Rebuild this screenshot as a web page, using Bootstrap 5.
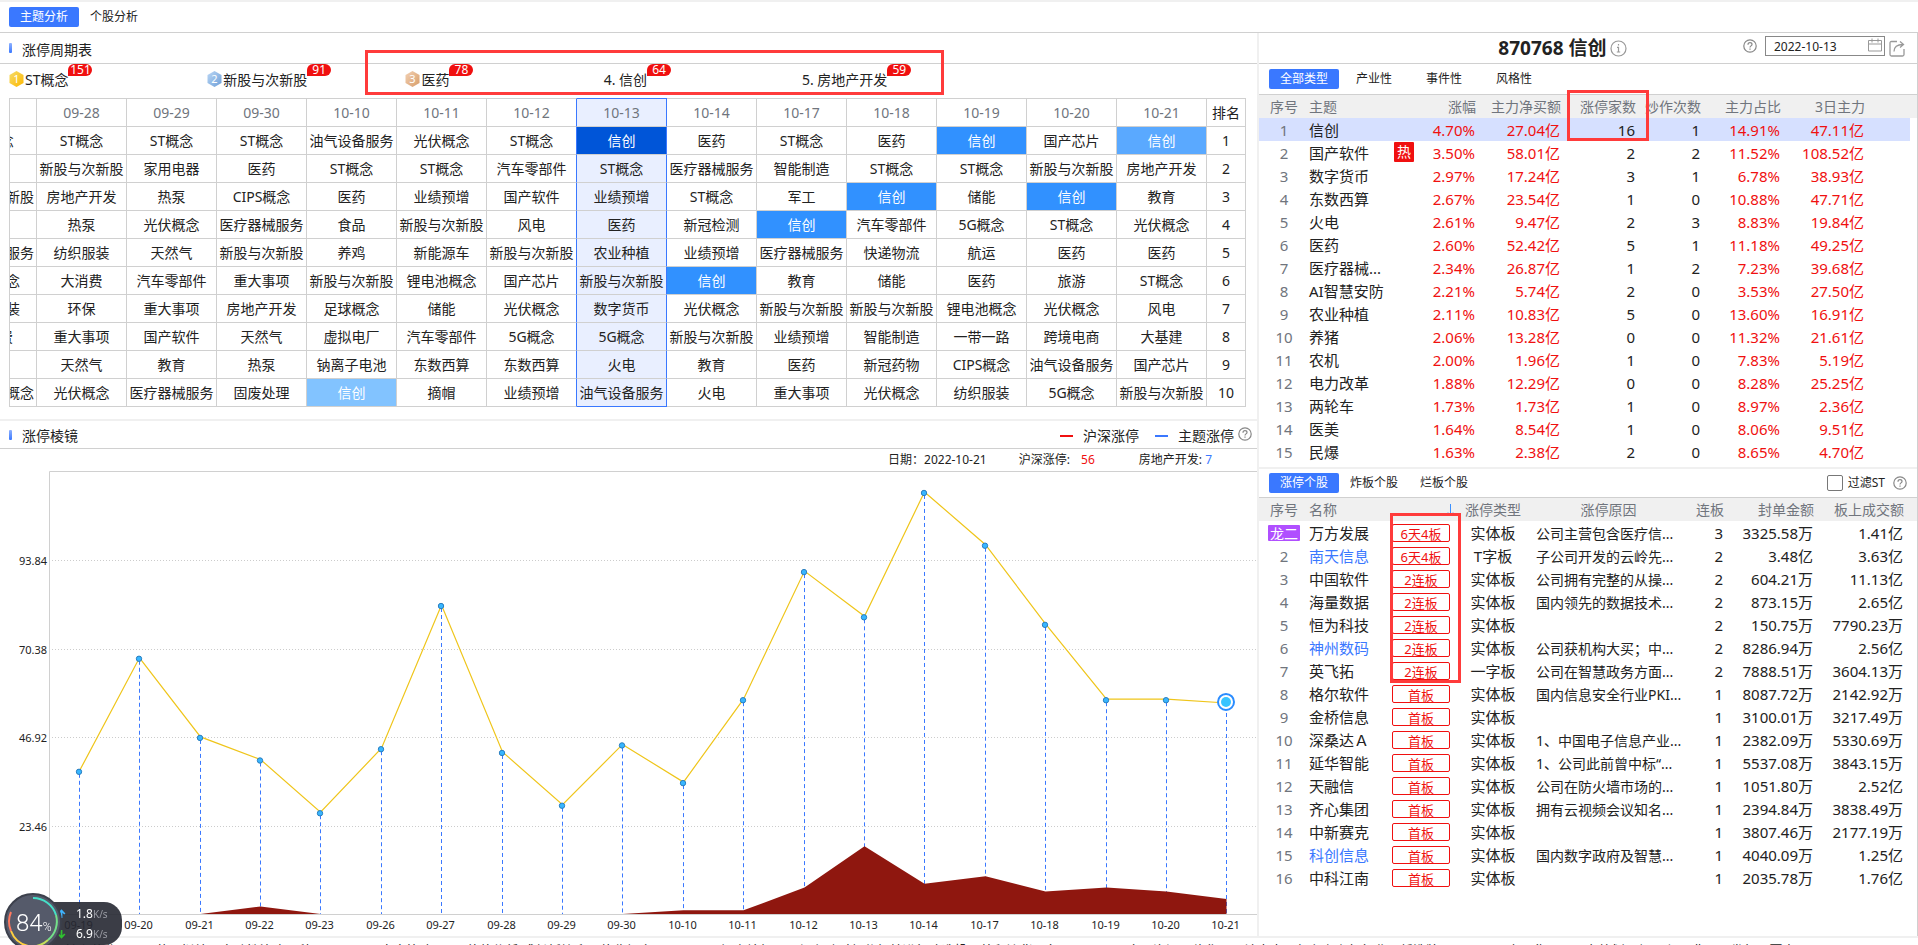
<!DOCTYPE html>
<html lang="zh-CN">
<head>
<meta charset="utf-8">
<meta name="viewport" content="width=device-width, initial-scale=1">
<title>主题分析</title>
<link rel="stylesheet" href="https://cdn.jsdelivr.net/npm/bootstrap@5.3.0/dist/css/bootstrap.min.css">
<style>
  :root { --line:#d0d0d0; --strip:#f0f0f0; --blue:#3a78ff; --red:#f01010; --ink:#222; --dim:#70757d; }
  body { font-family:"Noto Sans","Noto Sans CJK SC",sans-serif; font-size:14px; line-height:20px; color:var(--ink); }
  .app { height:100vh; min-height:800px; border-top:2px solid var(--strip); }
  .app-tabs { height:31px; padding:0 9px; border-bottom:1px solid var(--line); }
  .tab-btn { border:0; background:none; color:var(--ink); font-size:12px; line-height:20px; height:20px; width:70px; padding:0; border-radius:2px; }
  .tab-btn.active { background:var(--blue); color:#fff; }
  .panes { grid-template-columns:minmax(0,1257fr) 2px minmax(0,659fr); min-height:0; }
  .splitter { background:var(--strip); }
  .bar { height:31px; border-bottom:1px solid var(--line); }
  .bar-short { height:28px; }
  .bar-title { padding:3px 0 0 10px; }
  .marker { width:3px; height:10px; margin-left:9px; background:linear-gradient(#8fb2ff,#3a78ff); border-radius:1px; }
  .gap-strip { height:2px; background:var(--strip); flex:none; }

  .rank-list { height:34px; padding:6px 9px 0; }
  .rank-item { width:16%; white-space:nowrap; }
  .rank-item svg { margin-right:1px; }
  .count { background:var(--red); color:#fff; font-size:12px; line-height:12px; height:12px; width:24px; text-align:center; border-radius:6px 6px 6px 0; margin-top:-6px; }
  .callout { position:absolute; border:3px solid #ff3b3b; pointer-events:none; z-index:3; }
  .callout-rank { left:29%; width:579px; top:17px; height:45px; }
  .callout-count { left:308px; top:-5px; width:82px; height:51px; }
  .callout-tag { left:131px; top:15px; width:71px; height:170px; }

  .cycle { table-layout:fixed; border-collapse:separate; border-spacing:0; width:calc(100% - 20px); margin:0 11px 12px 9px; }
  .cycle th, .cycle td { height:28px; padding:0; border-right:1px solid var(--line); border-bottom:1px solid var(--line); text-align:center; white-space:nowrap; overflow:hidden; font-weight:400; line-height:20px; }
  .cycle th { height:29px; border-top:1px solid var(--line); color:var(--dim); }
  .cycle th:first-child, .cycle td:first-child { border-left:1px solid var(--line); }
  .cycle th:last-child { color:var(--ink); }
  .cycle .cut { width:90px; margin-left:-63px; }
  .cycle .pre { border-right-color:var(--blue); }
  .cycle .sel { background:#e9efff; border-right-color:var(--blue); }
  .cycle th.sel { border-top-color:var(--blue); }
  .cycle tr:last-child .sel { border-bottom-color:var(--blue); }
  .cycle .lv1 { background:#0055d8; color:#fff; }
  .cycle .lv2 { background:#3191ff; color:#fff; }
  .cycle .lv3 { background:#5aa9ff; color:#fff; }
  .cycle .lv4 { background:#82c3ff; color:#fff; }

  .legend { padding:2px 5px 0 0; }
  .dash { width:13px; height:2px; margin-right:10px; }
  .dash-red { background:var(--red); }
  .dash-blue { background:var(--blue); }
  .info-row { height:22px; font-size:12px; line-height:20px; padding:1px 45px 0 0; gap:32px; }
  .info-row .wide { margin-right:12px; }
  .chart-box { min-height:200px; position:relative; }
  .chart-box svg { position:absolute; inset:0; width:100%; height:100%; }
  .chart-box text { font-size:11px; fill:var(--ink); }

  .side { border-right:1px solid var(--line); }
  .heading { width:56%; }
  .code { font-size:19px; font-weight:700; line-height:28px; }
  .date-input { width:120px; height:20px; border:1px solid #888; padding:0 8px; font-size:12px; line-height:18px; color:var(--ink); background:#fff; border-radius:0; }
  .date-wrap { position:relative; }
  .date-wrap svg { position:absolute; right:3px; top:2px; }
  .sub-tabs { height:31px; padding:0 10px; border-bottom:1px solid var(--line); }
  .sub-tabs-short { height:29px; }
  .st-label { font-size:12px; }
  .grid-table { table-layout:fixed; width:100%; border-collapse:separate; border-spacing:0; }
  .grid-table th, .grid-table td { padding:0; height:23px; line-height:22px; white-space:nowrap; overflow:visible; text-align:right; }
  .grid-table th { background:var(--strip); color:var(--dim); font-weight:400; font-size:14px; }
  .grid-table th svg { display:block; margin-left:auto; }
  .grid-table td { font-size:15px; padding-right:1px; }
  .grid-table .c { text-align:center; padding:0; }
  .grid-table .l { text-align:left; padding:0; }
  .grid-table .no { color:var(--dim); }
  .grid-table .up { color:var(--red); }
  .grid-table .picked td { background:#d6e0ff; }
  .grid-table .picked td:last-child { background:linear-gradient(to left,#fff 7px,#d6e0ff 7px); }
  .grid-table .why { font-size:14px; line-height:20px; padding-top:2px; }
  .grid-table a { color:inherit; text-decoration:none; }
  .grid-table a.held { color:var(--blue); }
  .hot { background:var(--red); color:#fff; font-size:14px; line-height:20px; width:20px; height:20px; display:block; border-radius:1px; text-align:center; }
  .dragon { background:#b04fff; color:#fff; font-size:14px; line-height:17px; height:16px; width:32px; display:block; margin:0 auto; border-radius:1px; }
  .streak { border:1px solid var(--red); color:var(--red); font-size:13px; line-height:19px; height:18px; width:58px; display:block; border-radius:2px; text-align:center; }
  .st-check { width:16px; height:16px; margin:0 5px 0 0; appearance:none; border:1px solid #777; border-radius:2px; background:#fff; }

  .ticker { height:9px; overflow:hidden; border-top:2px solid var(--strip); white-space:nowrap; padding-left:28px; gap:32px; font-size:13px; }
  .ticker span { line-height:20px; padding-top:2px; }
  .monitor { position:fixed; left:4px; bottom:-8px; width:118px; height:60px; z-index:5; color:#fff; }
  .monitor-pill { position:absolute; left:30px; top:9px; width:88px; height:43px; border-radius:18px; background:rgba(38,40,50,.9); padding:2px 9px 0 23px; font-size:12px; }
  .monitor-pill div { height:20px; line-height:20px; }
  .monitor-pill svg { margin:0 10px 2px 0; }
  .monitor-pill small { font-size:10px; color:#9a9ca4; }
  .monitor-disc { position:absolute; left:0; top:0; }
  .monitor-num { position:absolute; left:12px; top:16px; font:300 24px/28px Roboto,"Noto Sans",sans-serif; }
  .monitor-num small { font-size:12px; }
</style>
</head>
<body class="m-0 bg-white overflow-hidden">
<svg width="0" height="0" class="position-absolute" aria-hidden="true">
  <defs>
    <symbol id="i-help" viewBox="0 0 14 14"><circle cx="7" cy="7" r="6.2" fill="none" stroke="#888" stroke-width="1.2"/><path d="M5 5.7C5 4.4 5.8 3.7 7 3.7s2 .7 2 1.8c0 1.3-2 1.5-2 2.9M7 9.4v1.3" fill="none" stroke="#888" stroke-width="1.2"/></symbol>
    <linearGradient id="g1" x1="0" y1="0" x2="1" y2="1"><stop offset="0" stop-color="#f4dc6a"/><stop offset="1" stop-color="#ffb800"/></linearGradient>
    <linearGradient id="g2" x1="0" y1="0" x2="1" y2="1"><stop offset="0" stop-color="#bcd7f5"/><stop offset="1" stop-color="#6d9fd8"/></linearGradient>
    <linearGradient id="g3" x1="0" y1="0" x2="1" y2="1"><stop offset="0" stop-color="#f3d2b5"/><stop offset="1" stop-color="#d79c68"/></linearGradient>
  </defs>
</svg>

<div class="app d-flex flex-column">
  <nav class="app-tabs d-flex align-items-center flex-shrink-0">
    <button type="button" class="tab-btn active">主题分析</button>
    <button type="button" class="tab-btn">个股分析</button>
  </nav>

  <div class="panes d-grid flex-grow-1">
    <main class="d-flex flex-column position-relative">
      <header class="bar d-flex align-items-center flex-shrink-0"><i class="marker"></i><span class="bar-title">涨停周期表</span></header>
      <div class="rank-list d-flex" id="ranks"></div>
      <div class="callout callout-rank"></div>
      <table class="cycle" id="cycle"></table>
      <div class="gap-strip"></div>
      <header class="bar bar-short d-flex align-items-center flex-shrink-0">
        <i class="marker"></i><span class="bar-title me-auto">涨停棱镜</span>
        <div class="legend d-flex align-items-center">
          <i class="dash dash-red"></i><span class="me-3">沪深涨停</span>
          <i class="dash dash-blue"></i><span>主题涨停</span>
          <svg class="ms-1 mb-1" width="14" height="14"><use href="#i-help"/></svg>
        </div>
      </header>
      <div class="info-row d-flex justify-content-end flex-shrink-0">
        <span>日期：2022-10-21</span>
        <span class="wide">沪深涨停: <span class="ms-2" style="color:#f01010">56</span></span>
        <span>房地产开发: <span style="color:#3a78ff">7</span></span>
      </div>
      <div class="chart-box flex-grow-1"><svg id="chart"></svg></div>
    </main>

    <div class="splitter"></div>

    <aside class="side">
      <header class="bar d-flex align-items-center">
        <div class="heading d-flex align-items-center justify-content-end">
          <span class="code">870768 信创</span>
          <svg class="ms-1" width="17" height="17" viewBox="0 0 17 17" fill="none" stroke="#999" stroke-width="1.2"><circle cx="8.500" cy="8.500" r="7.500"/><path d="M8.500 4v1.600M7 7.300h1.500V12M6.800 12h3.400"/></svg>
        </div>
        <div class="d-flex align-items-center ms-auto pe-2 me-1">
          <svg class="me-1 mb-1" width="14" height="14"><use href="#i-help"/></svg>
          <div class="date-wrap mx-1 mb-1 d-flex">
            <input class="date-input" type="text" value="2022-10-13" aria-label="日期">
            <svg width="14" height="14" viewBox="0 0 14 14" fill="none" stroke="#999"><path d="M.5 2.500h13v10.500H.5zM.5 6h13M4 .5v4M10 .5v4"/></svg>
          </div>
          <svg width="16" height="17" viewBox="0 0 16 17" fill="none" stroke="#999" stroke-width="1.300"><path d="M8 1.500H2.500Q1 1.500 1 3v11.500Q1 16 2.500 16h11q1.500 0 1.500-1.500V9M5 11.500C5 7 8 4.500 14 4.500M11 1.500l3.500 3-3.500 3"/></svg>
        </div>
      </header>
      <nav class="sub-tabs d-flex align-items-center">
        <button type="button" class="tab-btn active">全部类型</button>
        <button type="button" class="tab-btn">产业性</button>
        <button type="button" class="tab-btn">事件性</button>
        <button type="button" class="tab-btn">风格性</button>
      </nav>
      <div class="position-relative pb-1">
        <table class="grid-table" id="themes"></table>
        <div class="callout callout-count"></div>
      </div>
      <div class="gap-strip"></div>
      <nav class="sub-tabs sub-tabs-short d-flex align-items-center">
        <button type="button" class="tab-btn active">涨停个股</button>
        <button type="button" class="tab-btn">炸板个股</button>
        <button type="button" class="tab-btn">烂板个股</button>
        <label class="st-label ms-auto d-flex align-items-center"><input class="st-check" type="checkbox">过滤ST</label>
        <svg class="ms-2" width="14" height="14"><use href="#i-help"/></svg>
      </nav>
      <div class="position-relative">
        <table class="grid-table" id="stocks"></table>
        <div class="callout callout-tag"></div>
      </div>
    </aside>
  </div>

  <footer class="ticker d-flex flex-shrink-0">
    <span>10:15 翰宇药业：公司药品拟纳入突破性治疗品种</span>
    <span>10:14 十金策略：A股估值偏低 成长板块迎正估收机会</span>
    <span>10:08 招商轮船：已经主动对部分船舶进行改造投入外贸液货服务</span>
    <span>10:08 金石资源王伟华：预计未来三年左右六氟行业正新洗牌</span>
    <span>17:58 东百集团：正在筹划不超10亿元非公开发行股票事项</span>
    <span>17:56</span>
  </footer>
</div>

<div class="monitor">
  <div class="monitor-pill">
    <div><svg width="9" height="10" viewBox="0 0 9 10"><path d="M4.500 9V2M1.200 5l3.300-3.500L7.800 5" fill="none" stroke="#3fb4ff" stroke-width="1.800"/></svg>1.8<small>K/s</small></div>
    <div><svg width="9" height="10" viewBox="0 0 9 10"><path d="M4.500 1v7M1.200 5l3.300 3.500L7.800 5" fill="none" stroke="#30c030" stroke-width="1.800"/></svg>6.9<small>K/s</small></div>
  </div>
  <svg class="monitor-disc" width="58" height="60" viewBox="0 0 58 60" fill="none" stroke-width="2">
    <circle cx="29" cy="29" r="28" fill="#555a6a" stroke="#3c404c"/>
    <path d="M29 5a24 24 0 0 1 23 17" stroke="#46dfc8"/><path d="M52 22a24 24 0 0 1-8 25" stroke="#74e08a"/><path d="M44 47a24 24 0 0 1-20 6" stroke="#c5e05a"/><path d="M24 53a24 24 0 0 1-17-15" stroke="#ffd040"/><path d="M7 38a24 24 0 0 1 0-19" stroke="#ff7a60"/>
  </svg>
  <div class="monitor-num">84<small>%</small></div>
</div>

<script src="https://cdn.jsdelivr.net/npm/bootstrap@5.3.0/dist/js/bootstrap.bundle.min.js"></script>
<script>
const $ = id => document.getElementById(id);

// ranking strip: the first three places carry a medal
const ranks = [['ST概念',151],['新股与次新股',91],['医药',78],['4. 信创',64],['5. 房地产开发',59]];
$('ranks').innerHTML = ranks.map(([n, c], i) => `<div class="rank-item d-flex">${i < 3 ?
  `<svg width="15" height="18" viewBox="0 0 15 18"><path d="M7.500 1L14.500 5v8L7.500 17 .5 13V5z" fill="url(#g${i+1})"/><text x="7.500" y="13" font-size="11" fill="#fff" text-anchor="middle">${i+1}</text></svg>` : ''}<span>${n}</span><span class="count">${c}</span></div>`).join('');

// cycle table, one string per column (date first, then places 1-10)
const cycle = [
 '09-27 ST概念 储能 新股与次新股 风电 医疗器械服务 光伏概念 纺织服装 大消费 教育 华为汽车概念',
 '09-28 ST概念 新股与次新股 房地产开发 热泵 纺织服装 大消费 环保 重大事项 天然气 光伏概念',
 '09-29 ST概念 家用电器 热泵 光伏概念 天然气 汽车零部件 重大事项 国产软件 教育 医疗器械服务',
 '09-30 ST概念 医药 CIPS概念 医疗器械服务 新股与次新股 重大事项 房地产开发 天然气 热泵 固废处理',
 '10-10 油气设备服务 ST概念 医药 食品 养鸡 新股与次新股 足球概念 虚拟电厂 钠离子电池 信创*4',
 '10-11 光伏概念 ST概念 业绩预增 新股与次新股 新能源车 锂电池概念 储能 汽车零部件 东数西算 摘帽',
 '10-12 ST概念 汽车零部件 国产软件 风电 新股与次新股 国产芯片 光伏概念 5G概念 东数西算 业绩预增',
 '10-13 信创*1 ST概念 业绩预增 医药 农业种植 新股与次新股 数字货币 5G概念 火电 油气设备服务',
 '10-14 医药 医疗器械服务 ST概念 新冠检测 业绩预增 信创*2 光伏概念 新股与次新股 教育 火电',
 '10-17 ST概念 智能制造 军工 信创*2 医疗器械服务 教育 新股与次新股 业绩预增 医药 重大事项',
 '10-18 医药 ST概念 信创*2 汽车零部件 快递物流 储能 新股与次新股 智能制造 新冠药物 光伏概念',
 '10-19 信创*2 ST概念 储能 5G概念 航运 医药 锂电池概念 一带一路 CIPS概念 纺织服装',
 '10-20 国产芯片 新股与次新股 信创*2 ST概念 医药 旅游 光伏概念 跨境电商 油气设备服务 5G概念',
 '10-21 信创*3 房地产开发 教育 光伏概念 医药 ST概念 风电 大基建 国产芯片 新股与次新股',
 '排名 1 2 3 4 5 6 7 8 9 10'].map(s => s.split(' '));
const blanks = [0, 2, 4, 9];
let html = `<colgroup><col style="width:28px">${'<col>'.repeat(13)}<col style="width:39px"></colgroup>`;
for (let r = 0; r < 11; r++) {
  const tag = r ? 'td' : 'th';
  html += '<tr>' + cycle.map((col, c) => {
    const [name, lv] = col[r].split('*');
    const cls = [c === 6 ? 'pre' : '', c === 7 ? 'sel' : '', lv ? 'lv' + lv : ''].join(' ').trim();
    const text = c ? name : `<div class="cut">${blanks.includes(r) ? '' : name}</div>`;
    return `<${tag}${cls ? ` class="${cls}"` : ''}>${text}</${tag}>`;
  }).join('') + '</tr>';
}
$('cycle').innerHTML = html;

const cols = w => '<colgroup>' + w.map(x => x ? `<col style="width:${x}px">` : '<col>').join('') + '</colgroup>';
const themes = `信创 4.70 27.04 16 1 14.91 47.11
国产软件 3.50 58.01 2 2 11.52 108.52
数字货币 2.97 17.24 3 1 6.78 38.93
东数西算 2.67 23.54 1 0 10.88 47.71
火电 2.61 9.47 2 3 8.83 19.84
医药 2.60 52.42 5 1 11.18 49.25
医疗器械... 2.34 26.87 1 2 7.23 39.68
AI智慧安防 2.21 5.74 2 0 3.53 27.50
农业种植 2.11 10.83 5 0 13.60 16.91
养猪 2.06 13.28 0 0 11.32 21.61
农机 2.00 1.96 1 0 7.83 5.19
电力改革 1.88 12.29 0 0 8.28 25.25
两轮车 1.73 1.73 1 0 8.97 2.36
医美 1.64 8.54 1 0 8.06 9.51
民爆 1.63 2.38 2 0 8.65 4.70`.split('\n').map(l => l.split(' '));
$('themes').innerHTML = cols([50, 85, 82, 85, 75, 65, 80, 84, 0]) +
  '<tr><th class="c">序号</th><th class="l">主题</th><th>涨幅</th><th>主力净买额</th><th>涨停家数</th><th>炒作次数</th><th>主力占比</th><th>3日主力</th><th></th></tr>' +
  themes.map((t, i) => `<tr${i ? '' : ' class="picked"'}><td class="c no">${i+1}</td><td class="l">${t[0]}</td><td class="up">${i === 1 ?
    `<div class="d-flex justify-content-between"><span class="hot">热</span>${t[1]}%</div>` : t[1] + '%'}</td><td class="up">${t[2]}亿</td><td>${t[3]}</td><td>${t[4]}</td><td class="up">${t[5]}%</td><td class="up">${t[6]}亿</td><td></td></tr>`).join('');

const stocks = `万方发展|6天4板|实体板|公司主营包含医疗信...|3|3325.58万|1.41亿
*南天信息|6天4板|T字板|子公司开发的云岭先...|2|3.48亿|3.63亿
中国软件|2连板|实体板|公司拥有完整的从操...|2|604.21万|11.13亿
海量数据|2连板|实体板|国内领先的数据技术...|2|873.15万|2.65亿
恒为科技|2连板|实体板||2|150.75万|7790.23万
*神州数码|2连板|实体板|公司获机构大买；中...|2|8286.94万|2.56亿
英飞拓|2连板|一字板|公司在智慧政务方面...|2|7888.51万|3604.13万
格尔软件|首板|实体板|国内信息安全行业PKI...|1|8087.72万|2142.92万
金桥信息|首板|实体板||1|3100.01万|3217.49万
深桑达Ａ|首板|实体板|1、中国电子信息产业...|1|2382.09万|5330.69万
延华智能|首板|实体板|1、公司此前曾中标“...|1|5537.08万|3843.15万
天融信|首板|实体板|公司在防火墙市场的...|1|1051.80万|2.52亿
齐心集团|首板|实体板|拥有云视频会议知名...|1|2394.84万|3838.49万
中新赛克|首板|实体板||1|3807.46万|2177.19万
*科创信息|首板|实体板|国内数字政府及智慧...|1|4040.09万|1.25亿
中科江南|首板|实体板||1|2035.78万|1.76亿`.split('\n').map(l => l.split('|'));
$('stocks').innerHTML = cols([50, 83, 62, 78, 4, 145, 43, 90, 90, 0]) +
  '<tr><th class="c">序号</th><th class="l">名称</th><th><svg width="7" height="12" viewBox="0 0 7 12" fill="none" stroke="#3a90ff"><path d="M3.500 0v11M1 8.500l2.500 2.500L6 8.500"/></svg></th><th class="c">涨停类型</th><th></th><th class="c">涨停原因</th><th>连板</th><th>封单金额</th><th>板上成交额</th><th></th></tr>' +
  stocks.map((s, i) => `<tr><td class="c no">${i ? i+1 : '<span class="dragon">龙二</span>'}</td><td class="l"><a href="#"${s[0][0] === '*' ? ' class="held"' : ''}>${s[0].replace('*','')}</a></td><td><span class="streak">${s[1]}</span></td><td class="c">${s[2]}</td><td></td><td class="l why">${s[3]}</td><td>${s[4]}</td><td>${s[5]}</td><td>${s[6]}</td><td></td></tr>`).join('');

// limit-up chart: yellow market line, dark red theme area
const days = ['09-19','09-20','09-21','09-22','09-23','09-26','09-27','09-28','09-29','09-30','10-10','10-11','10-12','10-13','10-14','10-17','10-18','10-19','10-20','10-21'];
const market = [38,68,47,41,27,44,82,43,29,45,35,57,91,79,112,98,77,57,57,56];
const theme = [0,0,0,2,0,0,0,0,0,0,1,1,7,18,8,10,6,7,6,4];
function draw() {
  const svg = $('chart'), W = svg.clientWidth, H = svg.clientHeight;
  const left = 49, top = 1, base = H - 22, step = (W - left) / 20;
  const x = i => Math.floor(left + step * (i + .5)) + .5;
  const y = v => base - v * (base - top) / 117.3;
  let s = `<path d="M${W} ${top-.5}H${left+.5}V${base+.5}H${W}" fill="none" stroke="#d0d0d0"/>`;
  [23.46, 46.92, 70.38, 93.84].forEach(v => {
    const gy = Math.round(y(v)) + .5;
    s += `<path d="M${left+3} ${gy}H${W}" stroke="#ccc" stroke-dasharray="1 2"/><text x="47" y="${gy+4}" text-anchor="end">${v}</text>`;
  });
  days.forEach((d, i) => {
    s += `<path d="M${x(i)} ${y(market[i])+3}V${base}" stroke="#3a78ff" stroke-dasharray="4 3"/><text x="${x(i)-1}" y="${base+15}" text-anchor="middle">${d}</text>`;
  });
  s += `<polygon points="${x(0)},${base} ${theme.map((v, i) => `${x(i)},${v ? y(v) : base}`).join(' ')} ${x(19)},${base}" fill="#8f170f"/>`;
  s += `<polyline points="${market.map((v, i) => `${x(i)},${y(v)}`).join(' ')}" fill="none" stroke="#efc51a" stroke-width="1.200"/>`;
  market.forEach((v, i) => { if (i < 19) s += `<circle cx="${x(i)-.5}" cy="${y(v)+1}" r="2.700" fill="#38b6ff" stroke="#2a7fc0"/>`; });
  s += `<circle cx="${x(19)-.5}" cy="${y(56)-1}" r="8" fill="#fff" stroke="#2a8cff" stroke-width="2"/><circle cx="${x(19)-.5}" cy="${y(56)-1}" r="5" fill="#38c4ff"/>`;
  svg.innerHTML = s;
}
draw();
addEventListener('resize', draw);
</script>
</body>
</html>
